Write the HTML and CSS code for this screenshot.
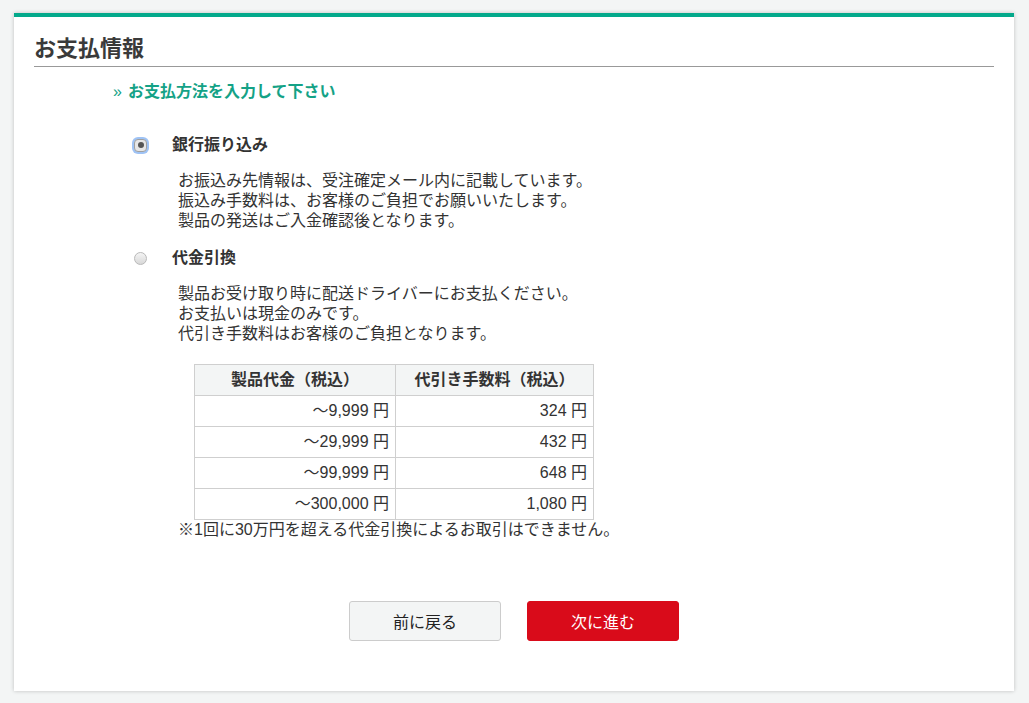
FILE: index.html
```html
<!DOCTYPE html>
<html lang="ja">
<head>
<meta charset="utf-8">
<title>お支払情報</title>
<link rel="stylesheet" href="styles.css">
</head>
<body>
<div class="card">
  <h1 class="title">お支払情報</h1>
  <p class="lead"><span class="chev">»</span>お支払方法を入力して下さい</p>

  <div class="method">
    <div class="option">
      <span class="radio checked"><span class="dot"></span></span>
      <span class="label">銀行振り込み</span>
    </div>
    <div class="desc">
      <p>お振込み先情報は、受注確定メール内に記載しています。</p>
      <p>振込み手数料は、お客様のご負担でお願いいたします。</p>
      <p>製品の発送はご入金確認後となります。</p>
    </div>
  </div>

  <div class="method">
    <div class="option">
      <span class="radio"></span>
      <span class="label">代金引換</span>
    </div>
    <div class="desc">
      <p>製品お受け取り時に配送ドライバーにお支払ください。</p>
      <p>お支払いは現金のみです。</p>
      <p>代引き手数料はお客様のご負担となります。</p>
      <table class="fee">
        <thead>
          <tr><th>製品代金（税込）</th><th>代引き手数料（税込）</th></tr>
        </thead>
        <tbody>
          <tr><td>～9,999 円</td><td>324 円</td></tr>
          <tr><td>～29,999 円</td><td>432 円</td></tr>
          <tr><td>～99,999 円</td><td>648 円</td></tr>
          <tr><td>～300,000 円</td><td>1,080 円</td></tr>
        </tbody>
      </table>
      <p class="note">※1回に30万円を超える代金引換によるお取引はできません。</p>
    </div>
  </div>

  <div class="actions">
    <button class="btn back">前に戻る</button>
    <button class="btn next">次に進む</button>
  </div>
</div>
</body>
</html>
```

FILE: styles.css
```css
html, body {
  margin: 0;
  padding: 0;
}
body {
  background: #f3f5f5;
  padding: 13px 15px 12px 14px;
  font-family: "Liberation Sans", "Noto Sans CJK JP", sans-serif;
  color: #333;
  font-size: 16px;
  line-height: 20px;
}
.card {
  width: 960px;
  background: #fff;
  border-top: 4px solid #03a98b;
  box-shadow: 0 0 4px rgba(0, 0, 0, 0.22);
  padding: 17px 20px 50px 20px;
}
.title {
  margin: 0;
  font-size: 22px;
  line-height: 30px;
  font-weight: bold;
  color: #3a3a3a;
  padding-bottom: 2px;
  border-bottom: 1px solid #999;
}
.lead {
  margin: 15px 0 0 79px;
  font-size: 16px;
  line-height: 20px;
  font-weight: bold;
  color: #14a286;
}
.chev {
  font-weight: normal;
  font-size: 16px;
  margin-right: 6px;
}
.method {
  margin-left: 100px;
  margin-top: 33px;
}
.method + .method {
  margin-top: 17px;
}
.option {
  display: flex;
  align-items: center;
  height: 20px;
}
.radio {
  position: relative;
  width: 13px;
  height: 13px;
  border-radius: 50%;
  border: 1px solid #b9b9b9;
  background: linear-gradient(#f4f4f4, #d8d8d8);
  box-sizing: border-box;
  margin-right: 25px;
  flex: none;
}
.radio.checked {
  box-shadow: 0 0 0 2px #9fc3f5;
  border-radius: 4px;
  background: #e6e6e6;
  border-color: #a0a0a0;
}
.radio .dot {
  position: absolute;
  left: 2.5px;
  top: 2.5px;
  width: 6px;
  height: 6px;
  border-radius: 50%;
  background: #555;
}
.label {
  font-weight: bold;
  color: #333;
}
.desc {
  margin: 16px 0 0 44px;
}
.desc p {
  margin: 0;
}
.fee {
  margin: 20px 0 0 16px;
  width: 400px;
  border-collapse: collapse;
  table-layout: fixed;
}
.fee th, .fee td {
  border: 1px solid #cfcfcf;
  height: 31px;
  padding: 0 6px;
  box-sizing: border-box;
}
.fee th {
  background: #f3f5f5;
  text-align: center;
  font-weight: bold;
  font-size: 16px;
}
.fee td {
  text-align: right;
}
.fee th:first-child, .fee td:first-child {
  width: 201px;
}
.note {
  margin: 0;
}
.actions {
  display: flex;
  justify-content: center;
  gap: 26px;
  margin-top: 61px;
}
.btn {
  width: 152px;
  height: 40px;
  border-radius: 3px;
  font-family: "Liberation Sans", "Noto Sans CJK JP", sans-serif;
  font-size: 16px;
  cursor: pointer;
}
.back {
  background: #f3f5f5;
  border: 1px solid #cccccc;
  color: #222;
}
.next {
  background: #d90b1a;
  border: 1px solid #d90b1a;
  color: #fff;
}
```
